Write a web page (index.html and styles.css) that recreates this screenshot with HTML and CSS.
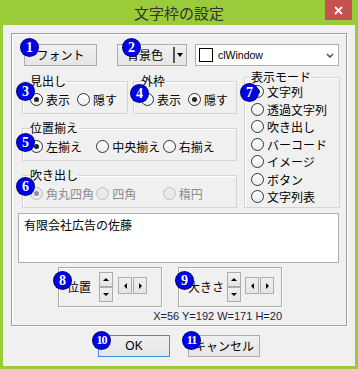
FILE: index.html
```html
<!doctype html>
<html>
<head>
<meta charset="utf-8" />
<title>文字枠の設定</title>
<link rel="stylesheet" href="styles.css">
</head>
<body>
<div class="window">
	<div class="titlebar">
		<span class="title">文字枠の設定</span>
		<a class="close" href="javascript:;"><svg width="9" height="9" viewBox="0 0 9 9"><path d="M1 1L8 8M8 1L1 8" stroke="#fff" stroke-width="1.8"/></svg></a>
	</div>
	<div class="client">
		<div class="frame etched">
			<div class="toolrow">
				<button class="btn font-btn">フォント</button>
				<div class="btn color-btn"><span>背景色</span><i class="split"></i><i class="drop"></i></div>
				<div class="combo">
					<span class="swatch"></span>
					<span class="combo-text">clWindow</span>
					<svg class="chev" width="8" height="5" viewBox="0 0 8 5"><path d="M1 1L4 4L7 1" fill="none" stroke="#555" stroke-width="1.6"/></svg>
				</div>
			</div>

			<div class="options">
				<div class="left-col">
					<div class="pair">
						<fieldset class="group g-head">
							<legend>見出し</legend>
							<div class="opts">
								<span class="opt"><i class="radio on"></i>表示</span>
								<span class="opt"><i class="radio"></i>隠す</span>
							</div>
						</fieldset>
						<fieldset class="group g-edge">
							<legend>外枠</legend>
							<div class="opts">
								<span class="opt"><i class="radio"></i>表示</span>
								<span class="opt"><i class="radio on"></i>隠す</span>
							</div>
						</fieldset>
					</div>
					<fieldset class="group">
						<legend>位置揃え</legend>
						<div class="opts fixed">
							<span class="opt"><i class="radio on"></i>左揃え</span>
							<span class="opt"><i class="radio"></i>中央揃え</span>
							<span class="opt"><i class="radio"></i>右揃え</span>
						</div>
					</fieldset>
					<fieldset class="group off">
						<legend>吹き出し</legend>
						<div class="opts fixed">
							<span class="opt"><i class="radio on"></i>角丸四角</span>
							<span class="opt"><i class="radio"></i>四角</span>
							<span class="opt"><i class="radio"></i>楕円</span>
						</div>
					</fieldset>
				</div>
				<fieldset class="group mode">
					<legend>表示モード</legend>
					<div class="mode-list">
						<span class="opt"><i class="radio on"></i>文字列</span>
						<span class="opt"><i class="radio"></i>透過文字列</span>
						<span class="opt"><i class="radio"></i>吹き出し</span>
						<span class="opt"><i class="radio"></i>バーコード</span>
						<span class="opt"><i class="radio"></i>イメージ</span>
						<span class="opt"><i class="radio"></i>ボタン</span>
						<span class="opt"><i class="radio"></i>文字列表</span>
					</div>
				</fieldset>
			</div>

			<div class="memo">有限会社広告の佐藤</div>

			<div class="adjust">
				<div class="adj-box etched">
					<span class="adj-label">位置</span>
					<div class="updown"><span class="sbtn up"></span><span class="sbtn down"></span></div>
					<div class="leftright"><span class="sbtn left"></span><span class="sbtn right"></span></div>
				</div>
				<div class="adj-box etched size">
					<span class="adj-label">大きさ</span>
					<div class="updown"><span class="sbtn up"></span><span class="sbtn down"></span></div>
					<div class="leftright"><span class="sbtn left"></span><span class="sbtn right"></span></div>
				</div>
			</div>
			<div class="coords">X=56 Y=192 W=171 H=20</div>
		</div>

		<div class="buttons">
			<button class="btn ok">OK</button>
			<button class="btn">キャンセル</button>
		</div>
	</div>

	<span class="badge b1">1</span>
	<span class="badge b2">2</span>
	<span class="badge b3">3</span>
	<span class="badge b4">4</span>
	<span class="badge b5">5</span>
	<span class="badge b6">6</span>
	<span class="badge b7">7</span>
	<span class="badge b8">8</span>
	<span class="badge b9">9</span>
	<span class="badge b10 two">10</span>
	<span class="badge b11 two">11</span>
</div>
</body>
</html>
```

FILE: styles.css
```css
*{box-sizing: border-box;}
body{margin: 0; background: #9acb3a; font-family: "Noto Sans CJK JP", "Noto Sans", sans-serif; font-size: 12px; color: #000;}
.window{width: 358px; height: 369px; background: #9acb3a; padding: 0 3px 3px; display: flex; flex-direction: column; position: relative;}

/* title bar */
.titlebar{height: 25px; display: grid; grid-template-columns: 1fr auto 1fr;}
.title{grid-column: 2; font-size: 15px; line-height: 25px; color: #333;}
.close{grid-column: 3; justify-self: end; width: 27px; height: 20px; margin-right: 3px; background: #c75050; display: flex; align-items: center; justify-content: center;}

.client{flex: 1; background: #f0f0f0; padding-top: 8px; display: flex; flex-direction: column;}
.etched{border: 1px solid #a0a0a0; box-shadow: 1px 1px 0 #fff, inset 1px 1px 0 #fff;}
.frame{margin: 0 8px; height: 293px;}

/* buttons */
.btn{font: 12px/20px "Noto Sans CJK JP", sans-serif; color: #000; height: 22px; padding: 0; border: 1px solid #acacac; background: linear-gradient(#f0f0f0, #e5e5e5);}
.toolrow{display: flex; padding: 10px 0 0 12px;}
.font-btn{width: 73px;}
.color-btn{width: 70px; margin-left: 20px; display: flex; align-items: center; padding-left: 9px;}
.split{width: 2px; height: 16px; background: #555; margin-left: 10px;}
.drop{width: 0; height: 0; margin-left: 2px; border-left: 3.5px solid transparent; border-right: 3.5px solid transparent; border-top: 4px solid #000;}
.combo{width: 144px; height: 22px; margin-left: 8px; background: #fff; border: 1px solid #abadb3; display: flex; align-items: center; padding: 0 4px 0 3px;}
.swatch{width: 14px; height: 14px; border: 1px solid #000; background: #fff;}
.combo-text{font: 10.5px "Liberation Sans", sans-serif; margin-left: 5px;}
.chev{margin-left: auto;}

/* group boxes */
.options{display: grid; grid-template-columns: 215px 96px; column-gap: 7px; margin: 4px 0 0 10px;}
.left-col{display: flex; flex-direction: column; gap: 7px; margin-top: 4px;}
.pair{display: flex; gap: 5px;}
.group{margin: 0; min-width: 0; border: 1px solid #d5d5d5; box-shadow: inset 1px 1px 0 #fff; padding: 5px 7px 7px;}
.group legend{padding: 0; font-size: 12px; line-height: 14px;}
.g-head{width: 106px;}
.g-edge{width: 104px;}
.opts{display: flex; gap: 7px; line-height: 13px;}
.opts.fixed{gap: 0;}
.opts.fixed .opt{width: 68px;}
.opt{display: flex; align-items: center; gap: 3px; white-space: nowrap;}
.radio{display: block; flex: none; width: 13px; height: 13px; border: 1px solid #333; border-radius: 50%; background: linear-gradient(#fff, #ececec); position: relative;}
.radio.on::after{content: ""; position: absolute; left: 3px; top: 3px; width: 5px; height: 5px; border-radius: 50%; background: #222;}
.off .opt{color: #8d8d8d;}
.off .radio{border-color: #bcbcbc; background: #e9e9e9;}
.off .radio.on::after{background: #8f8f8f;}
.mode{padding: 0 0 0 6px; margin-top: 1px;}
.mode legend{line-height: 12px;}
.mode-list .opt{height: 17.5px;}

.memo{margin: 5px 0 0 6px; width: 321px; height: 50px; background: #fff; border: 1px solid #abadb3; padding: 3px 5px; line-height: 16px;}

/* position / size */
.adjust{display: flex; gap: 16px; margin: 4px 0 0 46px;}
.adj-box{width: 104px; height: 40px; display: flex; align-items: center; padding-left: 8px; border-color: #acacac;}
.adj-box.size{padding-left: 9px;}
.adj-label{width: 32px; line-height: 14px;}
.size .adj-label{width: 39px;}
.updown{display: flex; flex-direction: column;}
.leftright{display: flex; gap: 1px; margin: 0 0 3px 5px;}
.size .leftright{margin-left: 4px;}
.sbtn{width: 14px; height: 15px; border: 1px solid #acacac; background: linear-gradient(#f0f0f0, #e5e5e5); display: flex; align-items: center; justify-content: center;}
.leftright .sbtn{height: 17px;}
.sbtn::before{content: ""; width: 0; height: 0;}
.up::before{border-left: 3px solid transparent; border-right: 3px solid transparent; border-bottom: 3px solid #000;}
.down::before{border-left: 3px solid transparent; border-right: 3px solid transparent; border-top: 3px solid #000;}
.left::before{border-top: 3px solid transparent; border-bottom: 3px solid transparent; border-right: 3px solid #000;}
.right::before{border-top: 3px solid transparent; border-bottom: 3px solid transparent; border-left: 3px solid #000;}
.coords{width: 224px; margin: 2px 0 0 46px; text-align: right; font: 11px/14px "Liberation Sans", sans-serif; color: #1c1c3c;}

.buttons{display: flex; gap: 18px; margin-top: 9px; padding-left: 95px;}
.buttons .btn{width: 72px; font-size: 12px;}
.buttons .ok{border-color: #3c8ee6; font-family: "Liberation Sans", sans-serif;}

/* numbered markers */
.badge{position: absolute; width: 17px; height: 17px; border-radius: 50%; background: #0000f0; box-shadow: 0 0 0 1px #000070; color: #fff; font: bold 14px/17px "Liberation Serif", serif; text-align: center;}
.badge.two{font-size: 12px; letter-spacing: -1px;}
.b1{left: 21px; top: 39px;}
.b2{left: 123px; top: 39px;}
.b3{left: 17px; top: 83px;}
.b4{left: 131px; top: 85px;}
.b5{left: 17px; top: 134px;}
.b6{left: 17px; top: 178px;}
.b7{left: 241px; top: 84px;}
.b8{left: 54px; top: 272px;}
.b9{left: 176px; top: 272px;}
.b10{left: 93px; top: 332px;}
.b11{left: 183px; top: 332px;}
```
